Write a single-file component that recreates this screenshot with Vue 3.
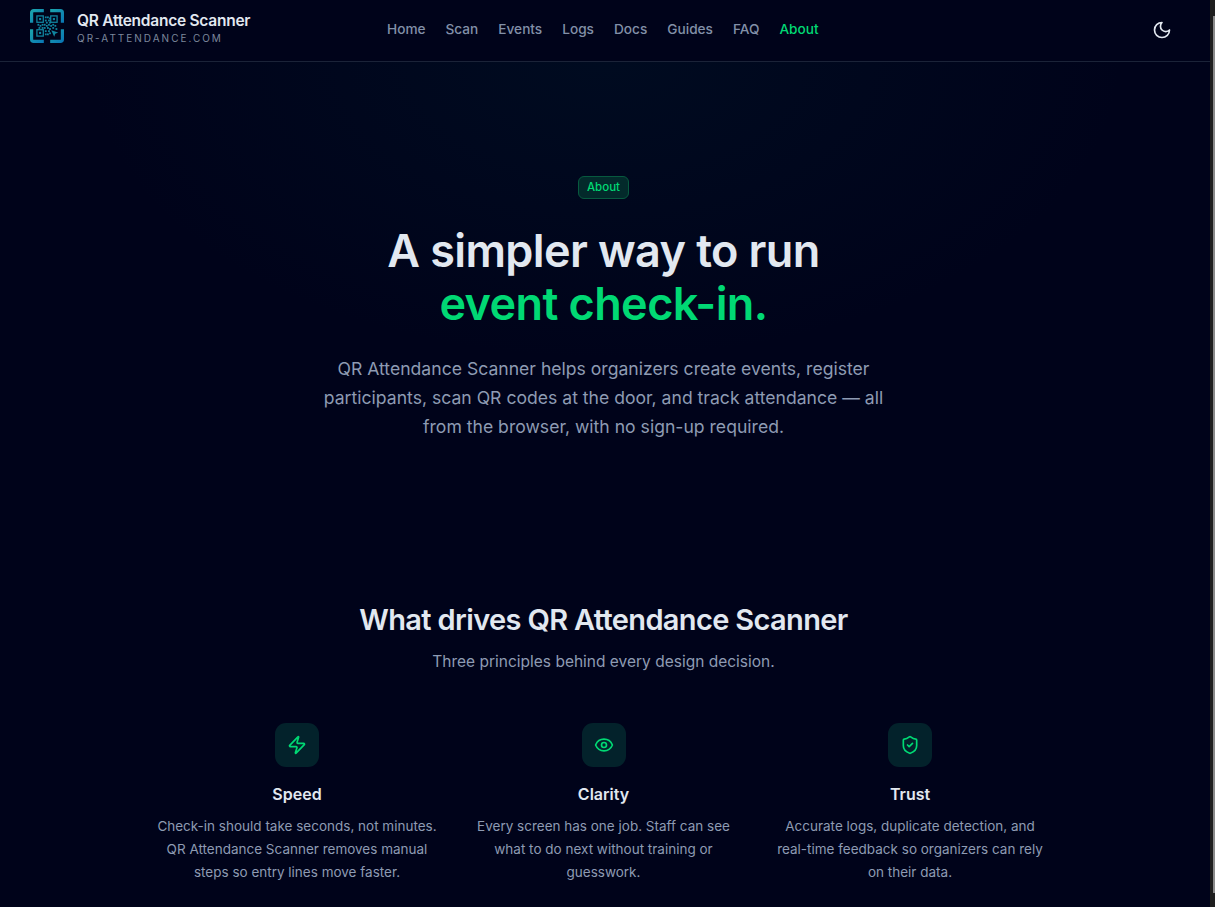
<script setup>
const links = ['Home', 'Scan', 'Events', 'Logs', 'Docs', 'Guides', 'FAQ', 'About']

const principles = [
  {
    title: 'Speed',
    icon: 'bolt',
    lines: ['Check-in should take seconds, not minutes.', 'QR Attendance Scanner removes manual', 'steps so entry lines move faster.'],
  },
  {
    title: 'Clarity',
    icon: 'eye',
    lines: ['Every screen has one job. Staff can see', 'what to do next without training or', 'guesswork.'],
  },
  {
    title: 'Trust',
    icon: 'shield',
    lines: ['Accurate logs, duplicate detection, and', 'real-time feedback so organizers can rely', 'on their data.'],
  },
]

// little fake qr pattern for the logo
const qrDots = [
  [14, 7], [16, 7], [18, 8], [14, 10], [17, 10], [15, 12], [18, 12],
  [7, 14], [9, 15], [11, 14], [13, 14], [15, 15], [17, 14], [19, 15], [21, 14], [23, 15],
  [8, 17], [11, 17], [13, 17], [16, 17], [18, 18], [21, 17], [24, 18],
  [14, 20], [17, 20], [14, 23], [16, 23], [18, 22],
]
</script>

<template>
  <div class="shell">
    <div class="page">
      <header class="topbar">
        <div class="brand">
          <svg class="logo" viewBox="0 0 32 32" width="34" height="34">
            <defs>
              <linearGradient id="logoGrad" x1="0" y1="0" x2="1" y2="1">
                <stop offset="0" stop-color="#1ba3ad" />
                <stop offset="1" stop-color="#0a78b4" />
              </linearGradient>
            </defs>
            <g fill="none" stroke="url(#logoGrad)" stroke-width="3">
              <path d="M1.500 13V3.500a2 2 0 0 1 2-2H13" />
              <path d="M19 1.500h9.500a2 2 0 0 1 2 2V13" />
              <path d="M30.500 19v9.500a2 2 0 0 1-2 2H19" />
              <path d="M13 30.500H3.500a2 2 0 0 1-2-2V19" />
            </g>
            <g fill="none" stroke="#10849f" stroke-width="1.200">
              <rect x="6.500" y="6.500" width="6" height="6" />
              <rect x="19.500" y="6.500" width="6" height="6" />
              <rect x="6.500" y="19.500" width="6" height="6" />
            </g>
            <g fill="#10849f">
              <rect x="8.500" y="8.500" width="2" height="2" />
              <rect x="21.500" y="8.500" width="2" height="2" />
              <rect x="8.500" y="21.500" width="2" height="2" />
              <rect v-for="(d, i) in qrDots" :key="i" :x="d[0]" :y="d[1]" width="1.700" height="1.700" />
              <path d="M20 20l6.500 2.200-2.700 1-1 2.800z" />
            </g>
          </svg>
          <div class="brand-text">
            <div class="brand-name">QR Attendance Scanner</div>
            <div class="brand-domain">QR-ATTENDANCE.COM</div>
          </div>
        </div>

        <nav class="nav">
          <a v-for="link in links" :key="link" class="nav-link" :class="{ active: link === 'About' }">{{ link }}</a>
        </nav>

        <button class="theme-btn" aria-label="Toggle theme">
          <svg viewBox="0 0 24 24" width="20" height="20" fill="none" stroke="currentColor" stroke-width="2" stroke-linecap="round" stroke-linejoin="round">
            <path d="M12 3a6 6 0 0 0 9 9 9 9 0 1 1-9-9Z" />
          </svg>
        </button>
      </header>

      <section class="hero">
        <span class="badge">About</span>
        <h1 class="hero-title">
          A simpler way to run<br />
          <span class="accent">event check-in.</span>
        </h1>
        <p class="hero-copy">
          QR Attendance Scanner helps organizers create events, register<br />
          participants, scan QR codes at the door, and track attendance — all<br />
          from the browser, with no sign-up required.
        </p>
      </section>

      <section class="drives">
        <h2 class="drives-title">What drives QR Attendance Scanner</h2>
        <p class="drives-sub">Three principles behind every design decision.</p>

        <div class="cards">
          <article v-for="item in principles" :key="item.title" class="card">
            <div class="icon-box">
              <svg viewBox="0 0 24 24" width="20" height="20" fill="none" stroke="currentColor" stroke-width="2" stroke-linecap="round" stroke-linejoin="round">
                <path v-if="item.icon === 'bolt'" d="M4 14a1 1 0 0 1-.78-1.630l9.900-10.200a.5.500 0 0 1 .860.460l-1.920 6.020A1 1 0 0 0 13 10h7a1 1 0 0 1 .780 1.630l-9.900 10.200a.5.500 0 0 1-.860-.460l1.920-6.020A1 1 0 0 0 11 14z" />
                <template v-else-if="item.icon === 'eye'">
                  <path d="M2.060 12.350a1 1 0 0 1 0-.700 10.750 10.750 0 0 1 19.880 0 1 1 0 0 1 0 .700 10.750 10.750 0 0 1-19.880 0" />
                  <circle cx="12" cy="12" r="3" />
                </template>
                <template v-else>
                  <path d="M20 13c0 5-3.500 7.500-7.660 8.950a1 1 0 0 1-.670-.010C7.500 20.500 4 18 4 13V6a1 1 0 0 1 1-1c2 0 4.500-1.200 6.240-2.720a1.170 1.170 0 0 1 1.520 0C14.510 3.810 17 5 19 5a1 1 0 0 1 1 1z" />
                  <path d="m9 12 2 2 4-4" />
                </template>
              </svg>
            </div>
            <h3 class="card-title">{{ item.title }}</h3>
            <p class="card-copy">
              <template v-for="(line, i) in item.lines" :key="i">{{ line }}<br v-if="i < item.lines.length - 1" /></template>
            </p>
          </article>
        </div>
      </section>
    </div>

    <div class="scrollbar"><div class="thumb" /></div>
  </div>
</template>

<style scoped>
.shell {
  height: 907px;
  overflow: hidden;
  display: flex;
  background: #00031a;
  color: #e2e8f0;
  font-family: Inter, "Liberation Sans", sans-serif;
}

.page {
  flex: 1;
  min-width: 0;
  background: radial-gradient(ellipse 520px 300px at 50% 60px, rgba(0, 60, 70, 0.14), transparent);
}

.topbar {
  height: 61px;
  display: flex;
  align-items: center;
  padding: 0 38px 0 30px;
  border-bottom: 1px solid #1b2338;
  background: #00031a;
}

.brand {
  display: flex;
  align-items: center;
  gap: 13px;
  width: 357px;
  margin-top: -5px;
}

.logo {
  flex: none;
  margin-top: -5px;
}

.brand-text {
  display: flex;
  flex-direction: column;
}

.brand-name {
  font-size: 15.500px;
  font-weight: 600;
  line-height: 20px;
  letter-spacing: -0.25px;
  color: #e2e8f0;
}

.brand-domain {
  font-size: 10px;
  line-height: 14px;
  letter-spacing: 2px;
  color: #7c879c;
}

.nav {
  display: flex;
  gap: 20px;
  margin-top: -4px;
}

.nav-link {
  font-size: 13.650px;
  font-weight: 500;
  color: #8290a8;
}

.nav-link.active {
  color: #00d974;
}

.theme-btn {
  margin-left: auto;
  margin-top: -2px;
  display: flex;
  padding: 0;
  border: none;
  background: none;
  color: #e2e8f0;
}

.hero {
  display: flex;
  flex-direction: column;
  align-items: center;
  text-align: center;
  padding: 114px 3px 0 0;
}

.badge {
  padding: 0 8px;
  height: 21px;
  line-height: 20px;
  font-size: 11.500px;
  font-weight: 500;
  color: #00d974;
  background: #032a2b;
  border: 1px solid #075a3f;
  border-radius: 6px;
}

.hero-title {
  margin: 25px 0 0;
  font-size: 45px;
  line-height: 53px;
  font-weight: 600;
  letter-spacing: -0.6px;
  color: #e2e8f0;
}

.accent {
  color: #00d974;
}

.hero-copy {
  margin: 24px 0 0;
  font-size: 17.600px;
  line-height: 29px;
  color: #8e9bb3;
}

.drives {
  margin-top: 161px;
  padding-right: 3px;
  display: flex;
  flex-direction: column;
  align-items: center;
  text-align: center;
}

.drives-title {
  margin: 0;
  font-size: 29px;
  line-height: 36px;
  font-weight: 600;
  letter-spacing: -0.65px;
  color: #e2e8f0;
}

.drives-sub {
  margin: 12px 0 0;
  font-size: 15.500px;
  line-height: 24px;
  color: #8e9bb3;
}

.cards {
  margin-top: 49px;
  display: grid;
  grid-template-columns: repeat(3, 283px);
  column-gap: 23.500px;
}

.card {
  display: flex;
  flex-direction: column;
  align-items: center;
}

.icon-box {
  width: 44px;
  height: 44px;
  display: flex;
  align-items: center;
  justify-content: center;
  border-radius: 11px;
  background: #03222b;
  color: #00d974;
}

.card-title {
  margin: 15px 0 0;
  font-size: 16px;
  line-height: 24px;
  font-weight: 600;
  color: #e2e8f0;
}

.card-copy {
  margin: 9px 0 0;
  font-size: 13.500px;
  line-height: 23px;
  white-space: nowrap;
  color: #8e9bb3;
}

.scrollbar {
  width: 5px;
  flex: none;
  background: #1f1f1f;
  position: relative;
}

.thumb {
  position: absolute;
  top: 16px;
  left: 3px;
  right: 0;
  height: 877px;
  background: #8a8a8a;
}
</style>

<style>
html, body {
  margin: 0;
  background: #00031a;
}
</style>
